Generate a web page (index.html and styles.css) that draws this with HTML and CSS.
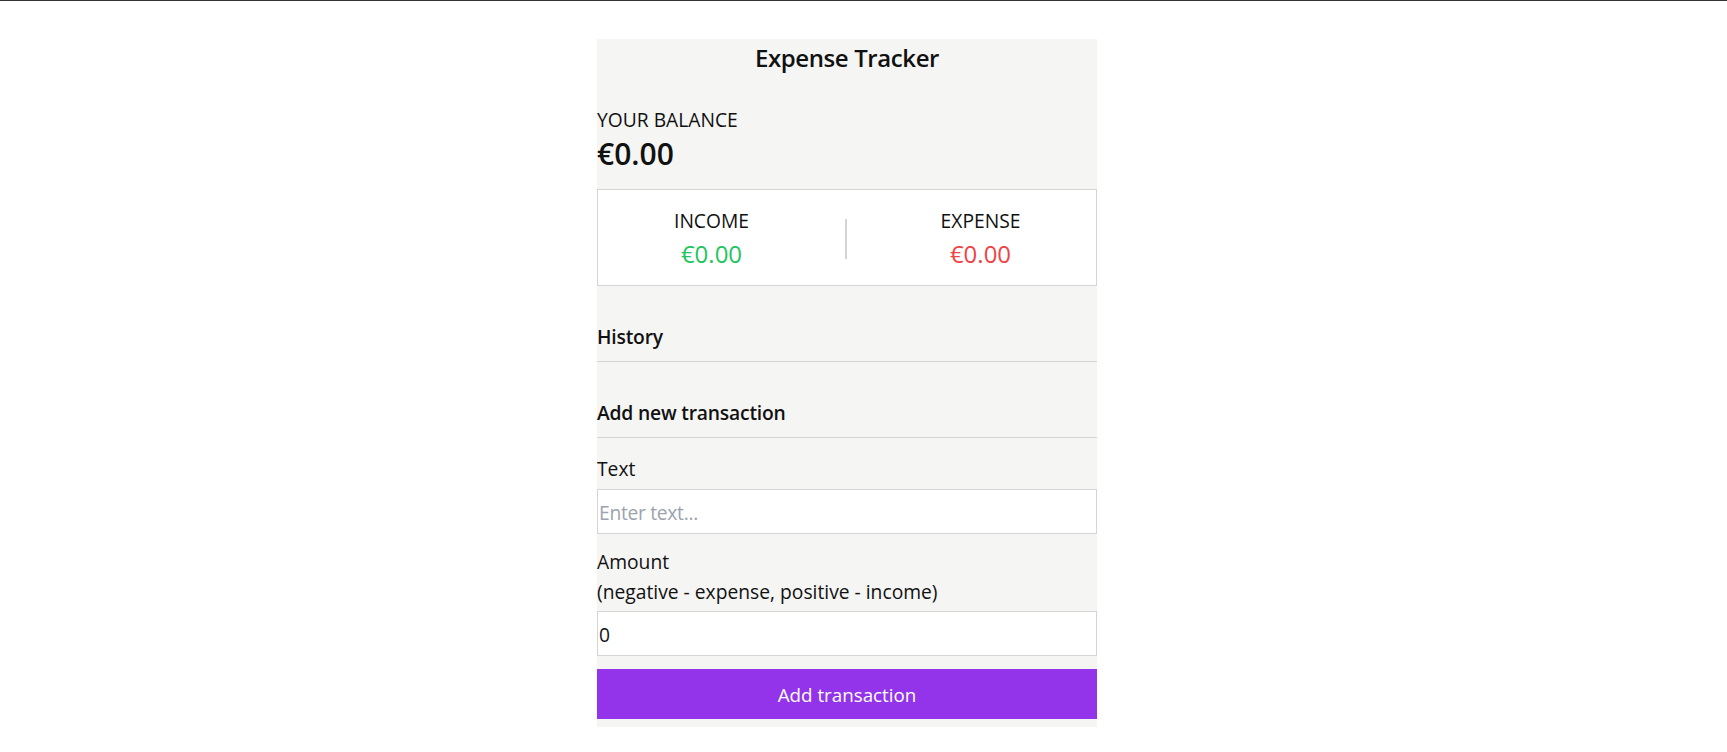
FILE: index.html
```html
<!DOCTYPE html>
<html lang="en">
<head>
<meta charset="utf-8">
<title>Expense Tracker</title>
<link rel="stylesheet" href="styles.css">
</head>
<body>
<div class="app">
  <h1 class="title">Expense Tracker</h1>
  <div class="balance-label">YOUR BALANCE</div>
  <div class="balance">€0.00</div>
  <div class="summary">
    <div class="col">
      <div class="col-label">INCOME</div>
      <div class="money plus">€0.00</div>
    </div>
    <div class="divider"></div>
    <div class="col">
      <div class="col-label">EXPENSE</div>
      <div class="money minus">€0.00</div>
    </div>
  </div>
  <h3 class="section">History</h3>
  <ul class="list"></ul>
  <h3 class="section">Add new transaction</h3>
  <form class="form">
    <label class="label label-text" for="text">Text</label>
    <input class="field field-text" id="text" type="text" placeholder="Enter text...">
    <label class="label label-amount" for="amount">Amount<br>(negative - expense, positive - income)</label>
    <input class="field field-amount" id="amount" type="number" value="0">
    <button class="btn" type="button">Add transaction</button>
  </form>
</div>
</body>
</html>
```
FILE: styles.css
```css
* { box-sizing: border-box; }
html, body { background: #ffffff; }
body {
  margin: 0;
  border-top: 1px solid #333333;
  padding-top: 38px;
  font-family: "Open Sans", "Noto Sans", sans-serif;
  font-size: 19.25px;
  line-height: 30px;
  color: #111111;
}
.app {
  width: 500px;
  margin-left: 597px;
  background: #f5f5f4;
  padding-bottom: 8px;
}
.title {
  margin: 0;
  padding-top: 1px;
  height: 35px;
  font-size: 24px;
  line-height: 35px;
  font-weight: 600;
  letter-spacing: -0.4px;
  text-align: center;
}
.balance-label {
  margin-top: 30px;
  padding-top: 1px;
  height: 30px;
}
.balance {
  font-size: 30px;
  line-height: 40px;
  font-weight: 600;
}
.summary {
  margin-top: 15px;
  background: #ffffff;
  border: 1px solid #d4d4d4;
  padding: 16px 22px 14px 20px;
  display: grid;
  grid-template-columns: 1fr 2px 1fr;
  column-gap: 40px;
  align-items: center;
}
.col { text-align: center; }
.money {
  font-size: 24px;
  line-height: 35px;
}
.plus { color: #22c55e; }
.minus { color: #ef4444; }
.divider {
  width: 2px;
  height: 40px;
  background: #d4d4d4;
}
.section {
  margin: 35px 0 0;
  padding-top: 1px;
  height: 41px;
  font-size: 19.3px;
  line-height: 30px;
  font-weight: 600;
  letter-spacing: -0.2px;
  padding-bottom: 10px;
  border-bottom: 1px solid #d4d4d4;
}
.list { margin: 0; padding: 0; list-style: none; }
.form { margin: 0; display: flex; flex-direction: column; }
.label { display: block; padding-top: 1px; }
.label-text { margin-top: 15px; height: 30px; }
.label-amount { margin-top: 12px; height: 60px; }
.field {
  display: block;
  width: 100%;
  height: 45px;
  margin: 0;
  padding: 1px 1px 0;
  border: 1px solid #d4d4d4;
  background: #ffffff;
  font-family: inherit;
  font-size: 19.25px;
  color: #111111;
  outline: none;
  appearance: textfield;
  -moz-appearance: textfield;
}
.field::placeholder { color: #9ca3af; letter-spacing: -0.3px; }
.field::-webkit-outer-spin-button,
.field::-webkit-inner-spin-button { -webkit-appearance: none; margin: 0; }
.field-text { margin-top: 6px; }
.field-amount { margin-top: 5px; }
.btn {
  margin-top: 13px;
  height: 50px;
  width: 100%;
  border: 0;
  padding: 1px 0 0;
  background: #9333ea;
  color: #ffffff;
  font-family: inherit;
  font-size: 18.8px;
  cursor: pointer;
}
```
